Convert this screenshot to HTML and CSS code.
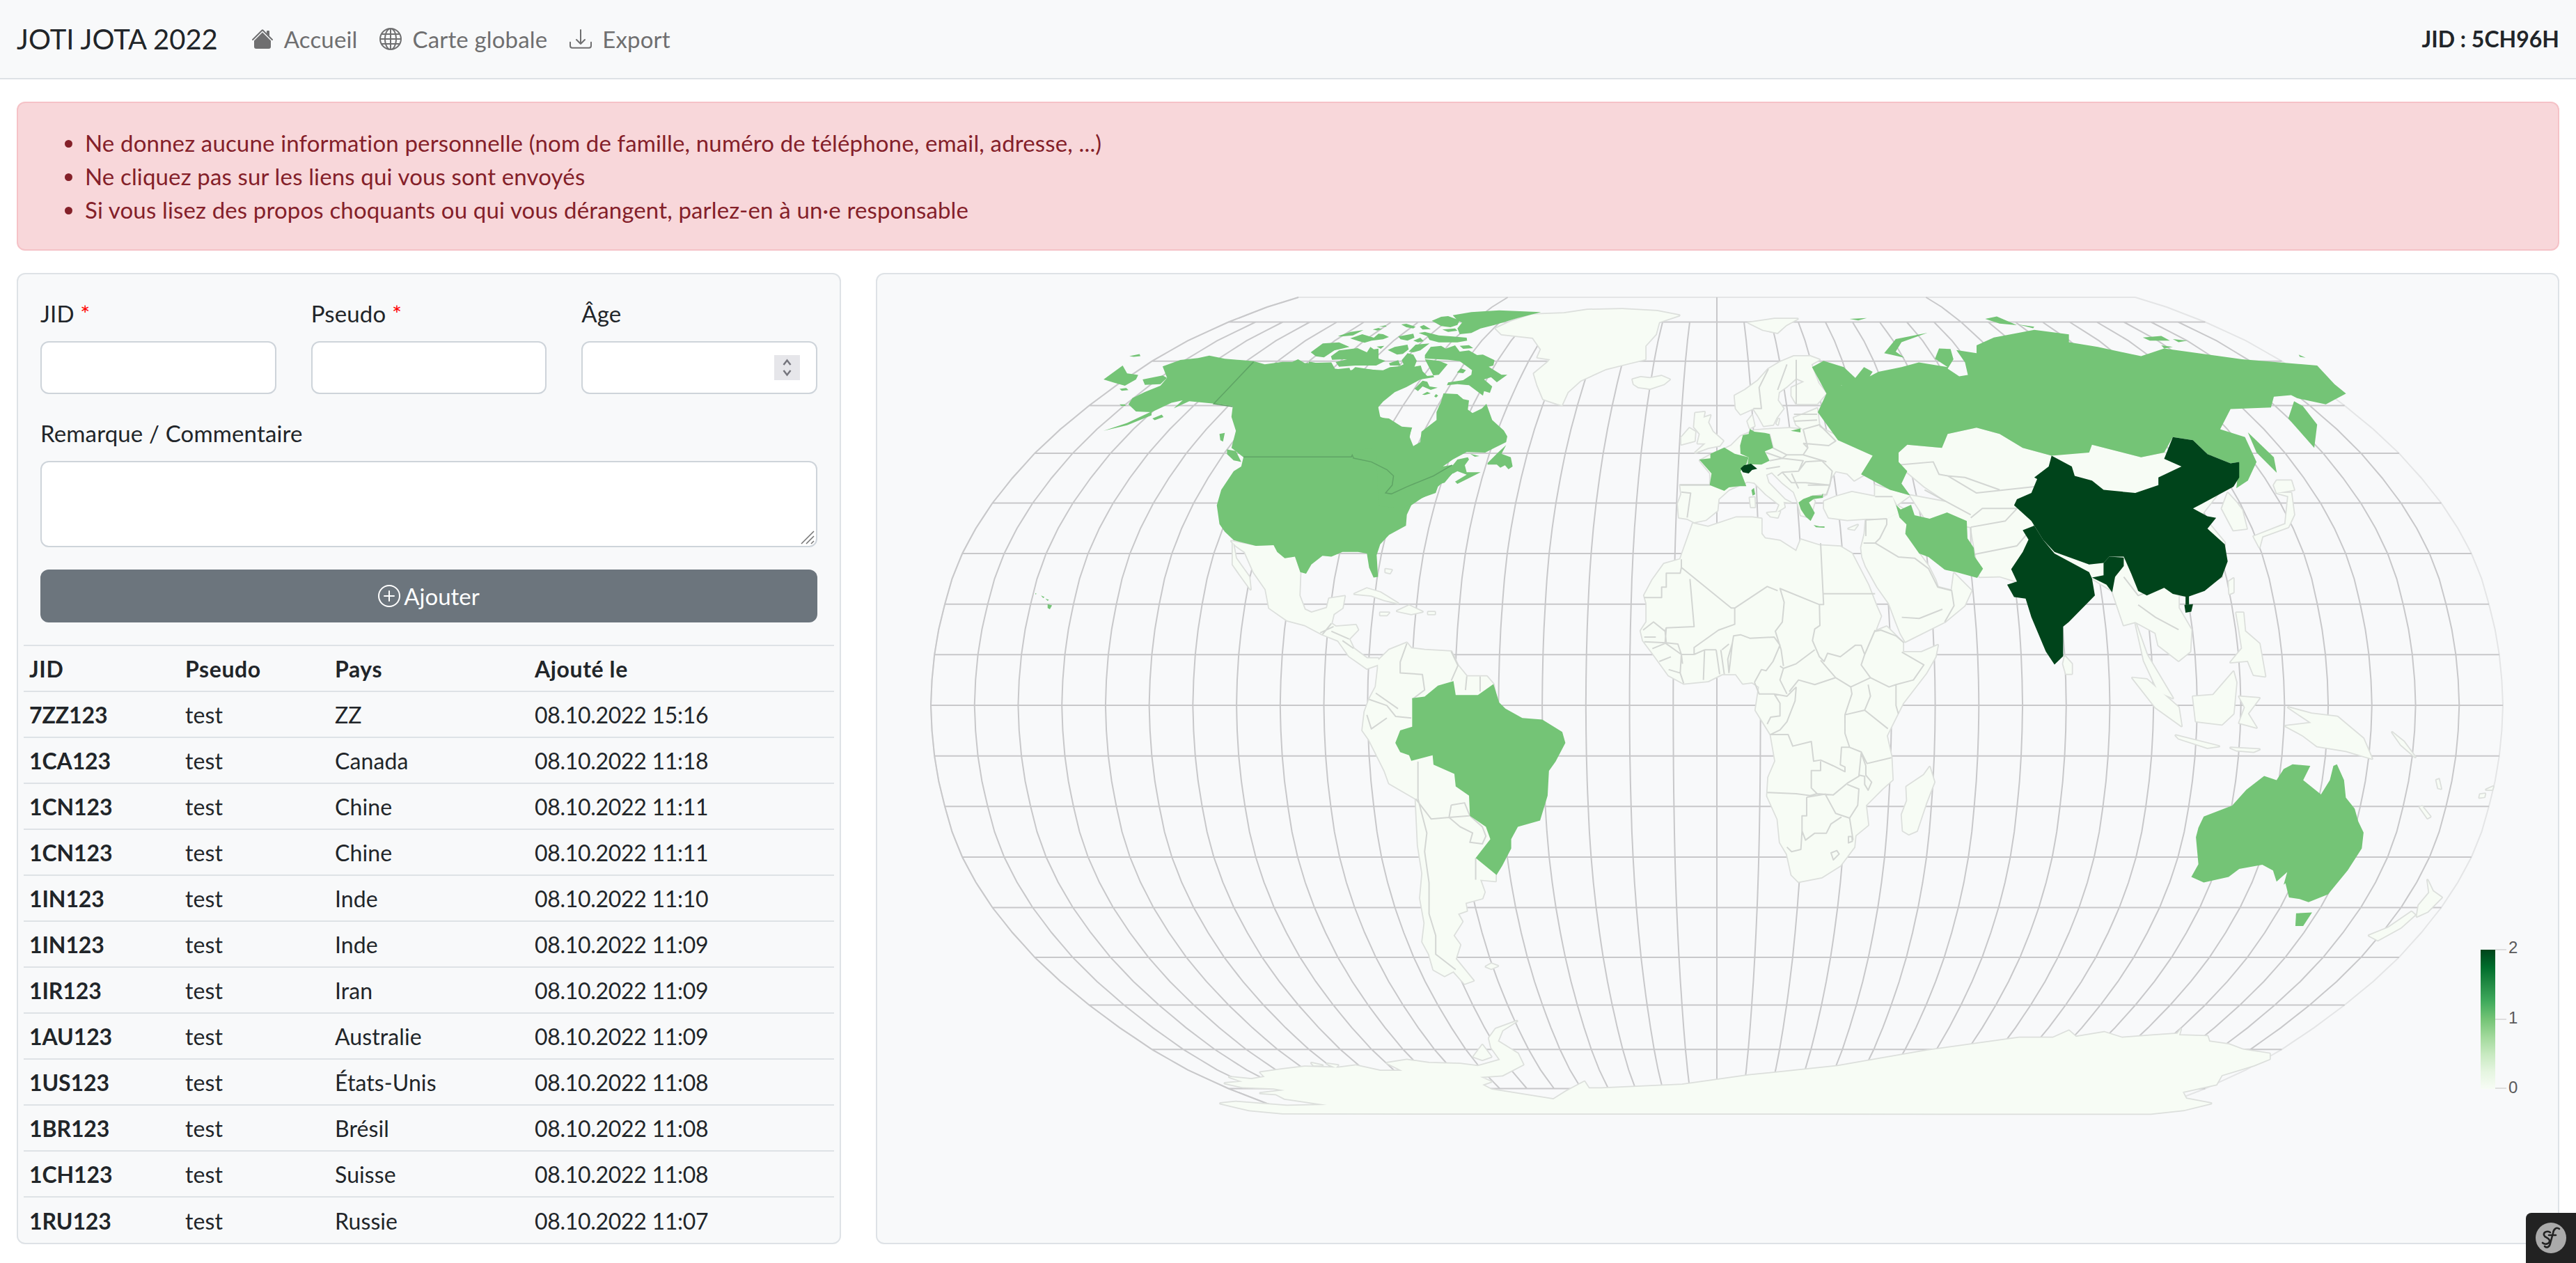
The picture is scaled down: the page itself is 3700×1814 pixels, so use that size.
FILE: index.html
```html
<!DOCTYPE html>
<html lang="fr">
  <head>
    <meta charset="UTF-8" />
    <title>JOTI JOTA 2022</title>
    <link rel="stylesheet" href="styles.css">
  </head>
  <body>
    <nav class="navbar">
      <a class="brand" href="#">JOTI JOTA 2022</a>
      <a class="nav-link" href="#">
        <svg class="icon" viewBox="0 0 16 16"><path fill-rule="evenodd" d="m8 3.293 6 6V13.5a1.5 1.5 0 0 1-1.5 1.5h-9A1.5 1.5 0 0 1 2 13.5V9.293l6-6zm5-.793V6l-2-2V2.5a.5.5 0 0 1 .5-.5h1a.5.5 0 0 1 .5.5z"/><path fill-rule="evenodd" d="M7.293 1.5a1 1 0 0 1 1.414 0l6.647 6.646a.5.5 0 0 1-.708.708L8 2.207 1.354 8.854a.5.5 0 1 1-.708-.708L7.293 1.5z"/></svg>
        Accueil
      </a>
      <a class="nav-link" href="#">
        <svg class="icon" viewBox="0 0 16 16"><path d="M0 8a8 8 0 1 1 16 0A8 8 0 0 1 0 8zm7.5-6.923c-.67.204-1.335.82-1.887 1.855A7.97 7.97 0 0 0 5.145 4H7.5V1.077zM4.09 4a9.267 9.267 0 0 1 .64-1.539 6.7 6.7 0 0 1 .597-.933A7.025 7.025 0 0 0 2.255 4H4.09zm-.582 3.5c.03-.877.138-1.718.312-2.5H1.674a6.958 6.958 0 0 0-.656 2.5h2.49zM4.847 5a12.5 12.5 0 0 0-.338 2.5H7.5V5H4.847zM8.5 5v2.5h2.99a12.495 12.495 0 0 0-.337-2.5H8.5zM4.51 8.5a12.5 12.5 0 0 0 .337 2.5H7.5V8.5H4.51zm3.99 0V11h2.653c.187-.765.306-1.608.338-2.5H8.5zM5.145 12c.138.386.295.744.468 1.068.552 1.035 1.218 1.65 1.887 1.855V12H5.145zm.182 2.472a6.696 6.696 0 0 1-.597-.933A9.268 9.268 0 0 1 4.09 12H2.255a7.024 7.024 0 0 0 3.072 2.472zM3.82 11a13.652 13.652 0 0 1-.312-2.5h-2.49c.062.89.291 1.733.656 2.5H3.82zm6.853 3.472A7.024 7.024 0 0 0 13.745 12H11.91a9.27 9.27 0 0 1-.64 1.539 6.688 6.688 0 0 1-.597.933zM8.5 12v2.923c.67-.204 1.335-.82 1.887-1.855.173-.324.33-.682.468-1.068H8.5zm3.68-1h2.146c.365-.767.594-1.61.656-2.5h-2.49a13.65 13.65 0 0 1-.312 2.5zm2.802-3.5a6.959 6.959 0 0 0-.656-2.5H12.18c.174.782.282 1.623.312 2.5h2.49zM11.27 2.461c.247.464.462.98.64 1.539h1.835a7.024 7.024 0 0 0-3.072-2.472c.218.284.418.598.597.933zM10.855 4a7.966 7.966 0 0 0-.468-1.068C9.835 1.897 9.17 1.282 8.5 1.077V4h2.355z"/></svg>
        Carte globale
      </a>
      <a class="nav-link" href="#">
        <svg class="icon" viewBox="0 0 16 16"><path d="M.5 9.9a.5.5 0 0 1 .5.5v2.5a1 1 0 0 0 1 1h12a1 1 0 0 0 1-1v-2.5a.5.5 0 0 1 1 0v2.5a2 2 0 0 1-2 2H2a2 2 0 0 1-2-2v-2.5a.5.5 0 0 1 .5-.5z"/><path d="M7.646 11.854a.5.5 0 0 0 .708 0l3-3a.5.5 0 0 0-.708-.708L8.5 10.293V1.5a.5.5 0 0 0-1 0v8.793L5.354 8.146a.5.5 0 1 0-.708.708l3 3z"/></svg>
        Export
      </a>
      <span class="jid">JID : 5CH96H</span>
    </nav>

    <main class="page">
      <div class="alert">
        <ul>
          <li>Ne donnez aucune information personnelle (nom de famille, numéro de téléphone, email, adresse, ...)</li>
          <li>Ne cliquez pas sur les liens qui vous sont envoyés</li>
          <li>Si vous lisez des propos choquants ou qui vous dérangent, parlez-en à un·e responsable</li>
        </ul>
      </div>

      <div class="columns">
        <section class="panel">
          <form class="entry-form">
            <div class="form-row">
              <div>
                <label for="jid">JID <span class="required">*</span></label>
                <input id="jid" type="text" />
              </div>
              <div>
                <label for="pseudo">Pseudo <span class="required">*</span></label>
                <input id="pseudo" type="text" />
              </div>
              <div class="number-field">
                <label for="age">Âge</label>
                <input id="age" type="number" />
                <span class="spin">
                  <svg viewBox="0 0 37 36"><path d="M13.5 14 18.500 7.500 23.500 14M13.500 22 18.500 28.500 23.500 22"/></svg>
                </span>
              </div>
            </div>
            <div class="comment-field">
              <label for="comment">Remarque / Commentaire</label>
              <textarea id="comment"></textarea>
              <svg class="grip" viewBox="0 0 22 22"><path d="M2 20 20 2M9 20 20 9M16 20l4-4"/></svg>
            </div>
            <button class="btn-add" type="button">
              <svg class="icon" viewBox="0 0 16 16"><path d="M8 15A7 7 0 1 1 8 1a7 7 0 0 1 0 14zm0 1A8 8 0 1 0 8 0a8 8 0 0 0 0 16z"/><path d="M8 4a.5.5 0 0 1 .5.5v3h3a.5.5 0 0 1 0 1h-3v3a.5.5 0 0 1-1 0v-3h-3a.5.5 0 0 1 0-1h3v-3A.5.5 0 0 1 8 4z"/></svg>
              Ajouter
            </button>
          </form>

          <table class="entries">
            <colgroup>
              <col class="col-jid"><col class="col-pseudo"><col class="col-pays"><col>
            </colgroup>
            <thead>
              <tr><th>JID</th><th>Pseudo</th><th>Pays</th><th>Ajouté le</th></tr>
            </thead>
            <tbody>
              <tr><th>7ZZ123</th><td>test</td><td>ZZ</td><td>08.10.2022 15:16</td></tr>
              <tr><th>1CA123</th><td>test</td><td>Canada</td><td>08.10.2022 11:18</td></tr>
              <tr><th>1CN123</th><td>test</td><td>Chine</td><td>08.10.2022 11:11</td></tr>
              <tr><th>1CN123</th><td>test</td><td>Chine</td><td>08.10.2022 11:11</td></tr>
              <tr><th>1IN123</th><td>test</td><td>Inde</td><td>08.10.2022 11:10</td></tr>
              <tr><th>1IN123</th><td>test</td><td>Inde</td><td>08.10.2022 11:09</td></tr>
              <tr><th>1IR123</th><td>test</td><td>Iran</td><td>08.10.2022 11:09</td></tr>
              <tr><th>1AU123</th><td>test</td><td>Australie</td><td>08.10.2022 11:09</td></tr>
              <tr><th>1US123</th><td>test</td><td>États-Unis</td><td>08.10.2022 11:08</td></tr>
              <tr><th>1BR123</th><td>test</td><td>Brésil</td><td>08.10.2022 11:08</td></tr>
              <tr><th>1CH123</th><td>test</td><td>Suisse</td><td>08.10.2022 11:08</td></tr>
              <tr><th>1RU123</th><td>test</td><td>Russie</td><td>08.10.2022 11:07</td></tr>
            </tbody>
          </table>
        </section>

        <section class="panel map-panel">
          <svg class="map" viewBox="1260 394 2414 1391" width="2414" height="1391">
            <defs>
              <linearGradient id="greens" x1="0" y1="1" x2="0" y2="0">
                <stop offset="0" stop-color="#f7fcf5"/>
                <stop offset=".125" stop-color="#e5f5e0"/>
                <stop offset=".25" stop-color="#c7e9c0"/>
                <stop offset=".375" stop-color="#a1d99b"/>
                <stop offset=".5" stop-color="#74c476"/>
                <stop offset=".625" stop-color="#41ab5d"/>
                <stop offset=".75" stop-color="#238b45"/>
                <stop offset=".875" stop-color="#006d2c"/>
                <stop offset="1" stop-color="#00441b"/>
              </linearGradient>
            </defs>

            <!-- filled in by map.js -->
            <g id="graticule"></g>

            <!-- countries with no entry -->
            <g class="land-coast"><g id="lands">
              <g transform="translate(1880 430) scale(.3333)">
                <path d="M805,125 L870,95 960,65 1100,60 1200,45 1350,42 1500,50 1596,69 1509,98 1495,150 1450,200 1450,258 1380,275 1280,300 1170,350 1115,400 1090,455 1070,450 1010,430 985,370 970,320 1030,270 1040,258 985,250 1000,215 965,165 830,150Z"/>
                <path d="M1395,345 L1430,335 1470,340 1520,330 1555,345 1530,365 1470,385 1420,378 1400,365Z"/>
              </g>
              <g transform="translate(1300 400) scale(.6378 .4464)">
                <path d="M735,845 L790,860 830,858 838,880 855,900 878,895 890,945 888,1020 900,1065 915,1075 950,1060 955,1030 990,1022 985,1060 965,1080 960,1110 970,1120 1015,1115 1020,1130 1000,1160 1010,1190 1040,1222 1065,1222 1070,1240 1040,1255 1025,1240 1000,1215 975,1165 940,1145 900,1115 860,1100 820,1060 812,1000 785,945 765,880 745,860Z"/>
                <path d="M738,845 L745,900 775,960 778,1000 755,955 738,920Z"/>
                <path d="M1012,1015 L1040,997 1070,1010 1110,1045 1080,1035 1050,1020Z"/>
                <path d="M1108,1070 L1135,1052 1165,1072 1140,1080Z"/>
                <path d="M1070,1075 h20 l-5,8 h-15Z"/>
                <path d="M1178,1073 h15 v7 h-15Z"/>
                <path d="M1082,935 l14,3 -4,10 -10,-3Z"/>
              </g>
              <g transform="translate(1300 1000) scale(.6378 .4464)">
                <path d="M1065,-114 L1090,-149 1130,-172 1140,-154 1170,-149 1230,-144 1245,-99 1265,-64 1310,-64 1325,-39 1330,0 1300,100 1330,570 1330,595 1295,590 1305,630 1300,650 1262,665 1265,690 1245,700 1255,725 1235,770 1250,800 1240,845 1280,915 1260,925 1235,885 1215,900 1190,880 1180,830 1165,790 1170,730 1160,650 1165,570 1155,480 1150,330 1090,280 1080,240 1045,140 1030,110 1035,50 1045,10 1060,-30 1065,-90Z"/>
                <path d="M1308,870 L1320,860 1335,868 1320,877Z"/>
                <path d="M850,1342 L775,1332 710,1310 745,1305 860,1318 950,1315 880,1300 855,1295 835,1280 800,1277 855,1268 830,1262 760,1258 720,1245 760,1240 730,1225 780,1232 810,1225 800,1210 850,1200 900,1192 975,1195 1015,1188 1070,1205 1120,1205 1085,1180 1130,1170 1180,1180 1250,1183 1290,1190 1340,1170 1320,1130 1315,1100 1330,1070 1378,1045 1345,1075 1335,1110 1380,1150 1392,1185 1345,1220 1295,1225 1320,1240 1300,1250 1320,1265 1460,1297 1490,1270 1530,1240 1540,1262 1568,1262 1750,1250 1900,1220 2100,1190 2300,1140 2509,1099 2585,1099 2621,1076 2637,1096 2701,1081 2741,1099 2813,1091 2865,1086 2873,1071 2869,1091 2933,1094 2937,1111 2981,1120 3013,1137 3073,1150 3073,1167 3037,1188 2965,1219 2953,1249 2877,1273 2885,1295 2941,1310 2881,1331 2805,1343Z"/>
                <path d="M915,1180 l25,8 -20,0Z"/>
                <path d="M950,1182 l25,5 -5,8Z"/>
                <path d="M1280,1160 l20,-38 20,38 -20,10Z"/>
              </g>
              <g transform="translate(2360 480) scale(.3333)">
                <path d="M395,265 L440,240 495,200 540,150 590,120 650,95 720,95 760,110 725,130 755,210 790,255 750,300 660,300 640,265 640,230 695,205 660,190 620,225 585,250 580,285 605,320 575,360 560,390 520,395 495,350 475,320 420,345 400,320Z"/>
                <path d="M450,375 L470,350 480,395 460,405Z"/>
                <path d="M160,650 L290,650 290,600 245,545 290,520 360,490 380,480 420,440 480,415 530,410 630,405 690,410 660,390 650,360 690,345 750,320 760,400 990,520 980,580 945,610 910,630 880,600 830,590 810,620 790,690 770,700 720,700 740,720 720,790 680,780 665,720 650,680 600,640 555,595 530,605 540,640 610,712 635,725 605,722 610,745 575,767 588,735 530,690 480,640 450,635 370,670 325,710 320,760 270,800 220,810 190,795 155,790 150,730 165,690Z"/>
                <path d="M535,770 L590,765 580,790 550,785Z"/>
                <path d="M460,705 L480,703 482,745 465,745Z"/>
                <path d="M225,340 L265,335 260,360 290,350 280,380 300,420 345,460 330,480 280,490 225,510 270,470 235,470 245,430 220,400Z"/>
                <path d="M165,445 L200,405 225,420 222,460 165,475Z"/>
                <path d="M575,385 l8,-20 3,0 -5,25Z"/>
                <path d="M885,838 L925,822 910,842Z"/>
                <path d="M780,720 L830,700 900,680 1000,700 1075,700 1100,770 1050,795 960,795 880,800 800,790 780,750Z"/>
                <path d="M960,800 L1050,795 1100,770 1090,735 1150,770 1130,850 1190,945 1230,1000 1260,1060 1270,1090 1330,1105 1340,1030 1370,1060 1415,1105 1385,1170 1300,1240 1130,1325 1110,1290 1090,1240 1060,1160 1010,1090 960,1000 945,960 940,920 955,860Z"/>
                <path d="M1000,650 L1075,672 1150,695 1095,735 1075,700 1000,700Z"/>
              </g>
              <g transform="translate(2340 780) scale(.3333)">
                <path d="M65,225 L100,160 150,90 220,70 275,-85 340,-70 460,-110 530,-110 570,-105 570,-40 585,-20 650,-10 720,35 740,-15 820,10 910,15 960,45 1030,180 1065,270 1085,315 1060,380 1110,360 1180,430 1180,470 1260,470 1330,440 1320,490 1280,560 1180,690 1160,730 1130,790 1110,830 1130,920 1135,1020 1090,1060 1020,1130 1030,1215 975,1260 970,1310 910,1390 830,1440 730,1460 700,1430 680,1340 650,1290 640,1190 595,1090 600,1010 630,940 610,825 545,720 560,620 530,600 490,605 460,565 400,565 340,595 235,605 170,570 105,480 60,420 50,378 75,340 75,260Z"/>
                <path d="M1195,1050 L1270,1000 1295,965 1315,1030 1280,1120 1240,1240 1205,1255 1180,1240 1175,1170 1198,1110Z"/>
              </g>
              <g transform="translate(2300 400) scale(.8292 .4464)">
                <path d="M255,142 L300,130 340,130 320,150 305,175 280,165Z"/>
                <path d="M515,560 L530,535 590,545 600,500 650,480 690,500 730,545 780,570 850,535 935,575 975,560 1005,600 1090,640 1040,760 1080,850 1075,960 1010,1020 885,1005 850,965 720,975 690,958 655,960 640,800 560,770 535,698 600,720 560,670 515,600Z"/>
                <path d="M885,1005 L905,1115 925,1105 960,1140 965,1180 1000,1230 1020,1200 1022,1130 1000,1060 1000,1020 950,1000Z"/>
                <path d="M925,1105 L945,1210 990,1350 965,1330 940,1230Z"/>
                <path d="M920,1285 L945,1290 1000,1380 1005,1440 960,1380Z"/>
                <path d="M995,1470 L1070,1505 1050,1510 1000,1480Z"/>
                <path d="M1090,1510 l50,5 -10,8 -30,-5Z"/>
                <path d="M1025,1345 L1060,1340 1095,1265 1100,1300 1095,1400 1075,1435 1030,1425Z"/>
                <path d="M1105,1345 L1140,1350 1120,1400 1135,1445 1105,1430 1115,1380Z"/>
                <path d="M1100,1075 L1112,1075 1115,1135 1140,1175 1150,1280 1130,1275 1120,1230 1090,1235 1110,1190 1105,1130Z"/>
                <path d="M1087,975 L1095,965 1095,1010 1088,1015Z"/>
                <path d="M1190,1380 L1230,1400 1275,1410 1320,1480 1335,1545 1290,1520 1240,1505 1215,1470 1185,1440 1230,1430Z"/>
                <path d="M1130,830 L1185,790 1190,700 1170,690 1195,690 1200,760 1190,800 1145,830 1140,865Z"/>
                <path d="M1170,650 L1195,650 1200,680 1170,690 1165,665Z"/>
                <path d="M1085,690 L1075,740 1095,810 1118,805 1110,745 1100,720Z"/>
                <path d="M803,1215 L815,1240 815,1272 805,1272 800,1240Z"/>
                <path d="M1370,1460 l20,30 20,50 -25,-40Z"/>
              </g>
              <g transform="translate(2900 1100) scale(.5102 .4554)">
                <path d="M985,535 L1040,510 1105,460 1115,470 1075,510 1010,550Z"/>
                <path d="M1125,440 L1155,400 1150,360 1165,395 1190,415 1150,460 1120,475Z"/>
                <path d="M1175,45 L1182,42 1188,72 1180,70Z"/>
                <path d="M1128,130 L1135,128 1158,160 1150,165Z"/>
                <path d="M1298,90 L1312,88 1310,98 1296,100Z"/>
                <path d="M1315,75 L1335,65 1332,75Z"/>
              </g>
            </g></g>
            <use class="land-fill" href="#lands"/>

            <!-- inner borders -->
            <g class="borders">
              <path transform="translate(1300 400) scale(.6378 .4464)" d="M940,1145 L960,1110 M965,1120 L935,1140 M1000,1160 L960,1135 M1010,1190 L985,1165"/>
              <path transform="translate(1300 1000) scale(.6378 .4464)" d="M1130,-170 L1115,-110 1115,-75 1165,-70 1170,-20 1142,10 M1230,-144 L1245,-99 1230,-50 M1265,-64 L1262,-20 M1295,-64 L1295,-15 M1045,10 L1085,30 1105,65 1140,70 M1040,60 L1050,105 1085,70 M1060,-10 L1110,40 M1155,210 L1155,330 M1150,330 L1185,395 1225,390 1270,385 M1230,350 L1260,343 1272,385 1300,420 1308,450 1300,475 1272,470 1278,440 1250,420 1225,390 1230,350 M1155,330 L1175,440 1170,500 1180,600 1180,700 1195,770 1195,830 1240,880 M1285,520 L1285,590"/>
              <path transform="translate(2340 780) scale(.3333)" d="M225,70 L225,105 440,280 455,280 595,187 640,205 M65,235 L140,235 140,190 160,190 160,130 220,130 225,105 M262,155 L280,360 160,365 155,380 105,340 M455,280 L455,350 385,375 280,450 280,480 M650,195 L668,255 660,340 630,380 655,460 665,530 M825,0 L838,265 820,265 648,195 M838,218 L1060,218 M820,265 L822,355 800,370 790,420 820,490 840,510 855,475 910,490 975,440 1000,440 1015,480 1060,375 M825,505 L890,580 955,620 1040,580 1000,525 1015,480 M1060,380 L1085,375 1150,400 1185,430 M1175,470 L1270,525 1225,590 1150,610 1120,620 1040,580 M1150,610 L1150,700 1160,735 M1030,610 L1040,660 1015,720 1115,800 M955,620 L960,650 930,740 1015,720 M690,640 L730,590 800,610 890,580 M720,620 L715,680 680,770 650,805 610,825 685,825 705,875 785,855 795,940 825,935 880,960 930,985 930,965 910,955 915,880 950,880 930,820 930,740 M950,880 L1000,900 1025,950 1130,925 M825,940 L825,980 785,980 785,1055 810,1080 880,1085 940,1035 990,1005 1000,905 M1000,905 L1020,960 1020,1000 1045,1030 1030,1065 1015,1040 1015,1005 990,1000 M940,1040 L990,1060 985,1130 950,1185 965,1280 M880,1085 L845,1082 890,1165 950,1185 M765,1095 L845,1082 M765,1095 L765,1175 745,1175 745,1240 760,1280 800,1250 850,1250 870,1210 915,1180 M595,1075 L720,1080 780,1088 810,1080 M745,1240 L740,1320 700,1330 680,1310 M430,560 L445,430 450,400 480,395 520,410 625,405 650,440 620,510 590,550 570,545 540,600 M540,600 L560,650 625,650 680,660 720,620 M650,530 L665,540 650,590 680,650 M665,540 L720,520 800,460 M625,650 L650,690 650,745 610,750 595,780 M325,460 L320,590 M375,460 L390,565 M325,460 L375,460 M280,480 L325,460 M395,460 L410,565 M430,560 L425,500 445,430 M400,460 L430,435 M160,365 L155,430 225,480 280,480 M100,455 L160,430 210,435 225,480 230,520 M225,480 L220,560 235,605 M170,545 L220,560 M130,510 L180,490 M60,375 L105,340 155,380 160,430 65,425 M65,405 L115,405 M870,1335 L895,1325 905,1340 880,1365Z M945,1265 L960,1265 962,1285 945,1292Z"/>
              <path transform="translate(2360 480) scale(.3333)" d="M545,430 L560,490 620,520 690,520 710,490 690,410 M690,470 L710,490 690,520 790,550 M690,410 L760,390 830,460 800,480 690,470 M650,375 L750,370 M650,345 L750,345 M165,680 L205,685 190,790 M160,650 L290,650 M530,580 L590,570 M560,490 L620,520 600,535 530,510 M545,545 L600,535 690,545 670,590 600,595 580,610 M670,590 L700,550 770,545 815,590 805,650 700,640 M710,650 L805,650 790,690 720,700 M600,595 L640,640 700,640 M640,600 L670,665 M540,150 L500,230 510,320 475,320 M620,130 L580,240 M660,300 L660,110 M960,800 L1050,795 M950,900 L1000,900 1100,960 1170,965 1230,1010 1270,1090 1330,1105 1340,1170 1300,1240 M1115,1220 L1190,1225 1290,1185 M1000,900 L1020,880 1050,820 1050,795 M960,800 L960,870 M1000,700 L1075,700"/>
              <path transform="translate(2300 400) scale(.8292 .4464)" d="M515,600 L575,590 585,630 600,635 650,690 700,680 750,670 M560,680 L640,760 M640,770 L660,740 720,740 700,780 640,800 M640,800 L640,890 720,860 750,795 M905,960 L930,1020 960,1000 M930,1050 L960,1090 1000,1130 M600,635 L630,640 690,680"/>
            </g>

            <!-- one entry -->
            <g class="level-1">
              <g transform="translate(1300 400) scale(.6378 .4464)">
                <path d="M580,283 L620,262 660,256 685,248 720,258 785,266 810,276 850,268 872,268 885,260 900,272 960,270 968,290 1000,295 1040,292 1085,297 1100,350 1065,410 1070,445 1090,455 1120,478 1140,482 1135,520 1150,560 1210,605 1232,600 1235,625 1200,670 1195,690 1165,705 1140,730 1130,760 1128,795 1090,825 1070,855 1062,890 1065,960 1055,962 1045,930 1040,885 1020,880 985,880 960,895 940,892 915,920 903,950 890,945 878,895 855,900 838,880 830,858 790,860 740,842 720,815 708,790 702,730 712,680 740,620 757,605 762,575 735,545 745,490 735,445 738,410 700,403 640,395 605,418 625,392 600,400 555,430 520,428 503,405 512,385 540,365 575,345 590,320Z"/>
                <path d="M555,428 L500,465 447,490 500,472 555,440Z"/>
                <path d="M557,450 L578,438 582,446 562,456Z"/>
                <path d="M535,325 L580,312 590,320 575,340 540,342Z"/>
                <path d="M447,325 L490,280 500,305 525,310 520,325 495,345 470,335Z"/>
                <path d="M505,250 L528,243 530,250 515,252Z"/>
                <path d="M483,355 l15,-3 5,7 -15,2Z"/>
                <path d="M483,405 l12,0 2,5 -10,0Z"/>
                <path d="M708,500 L720,497 716,525 710,520Z"/>
                <path d="M725,550 L745,555 757,590 740,585 725,565Z"/>
                <path d="M321,1048 L331,1052 326,1064 321,1060Z"/>
                <path d="M306,1020 l8,5 -3,3Z"/>
                <path d="M316,1030 l8,4 -3,3Z"/>
                <path d="M293,1012 l3,2 -2,3Z"/>
              </g>
              <g transform="translate(1880 430) scale(.3333)">
                <path d="M0,268 L40,275 110,295 100,303 175,295 180,310 200,292 290,305 320,305 350,292 390,288 408,280 400,262 425,232 450,238 465,265 455,290 482,285 490,310 510,330 560,325 598,280 560,265 500,258 540,335 480,345 420,378 370,400 320,440 290,475 310,510 345,513 400,548 445,552 433,590 450,632 480,615 485,570 550,520 550,485 570,440 580,405 640,408 665,430 690,435 685,475 705,490 745,470 765,450 790,520 840,565 855,590 850,615 800,640 760,660 680,658 620,690 570,725 620,715 622,745 585,790 550,800 520,840 400,900 300,890 290,640 0,670Z"/>
                <path d="M570,725 L620,715 640,690 685,680 690,690 672,715 680,745 740,745 700,765 640,795 630,785 680,755 640,740 622,750Z"/>
                <path d="M770,705 L815,660 850,628 830,665 870,680 878,720 860,732 845,715 825,725 810,712 770,712Z"/>
                <path d="M695,665 L735,675 715,678Z"/>
                <path d="M500,240 L525,205 570,200 590,212 630,198 650,225 690,220 725,240 750,238 800,262 795,285 775,290 830,325 855,325 810,357 785,335 755,345 790,375 780,403 755,395 750,415 710,385 690,370 640,365 595,370 600,358 665,348 700,325 703,305 680,288 650,266 600,260 500,255Z"/>
                <path d="M638,315 L655,297 677,305 665,318Z"/>
                <path d="M95,245 L130,220 210,210 250,228 265,205 280,215 300,212 300,255 330,265 290,285 200,285 130,290 115,270 165,258 100,260Z"/>
                <path d="M8,228 L60,190 130,185 175,205 110,220 65,250 30,245Z"/>
                <path d="M125,158 L180,140 235,132 190,155 140,160Z"/>
                <path d="M178,168 L230,150 280,165 300,148 320,150 345,162 320,172 270,178 240,187 215,180Z"/>
                <path d="M275,130 L300,123 315,128 295,134Z"/>
                <path d="M300,118 L330,112 335,118Z"/>
                <path d="M398,108 L420,105 460,118 450,125 420,120Z"/>
                <path d="M478,118 L495,110 525,128 490,130Z"/>
                <path d="M385,160 L450,148 455,165 425,178 395,172Z"/>
                <path d="M450,178 L480,165 495,180 470,185Z"/>
                <path d="M473,145 L500,140 560,155 620,160 680,165 682,178 640,185 560,185 520,175 510,158Z"/>
                <path d="M340,218 L370,205 425,195 430,215 405,235 380,238Z"/>
                <path d="M430,225 L460,195 520,190 480,220 450,228Z"/>
                <path d="M292,203 L325,200 310,213Z"/>
                <path d="M345,275 L385,262 395,285 350,285Z"/>
                <path d="M650,200 L690,197 708,210 665,213Z"/>
                <path d="M620,68 L700,55 820,47 1000,55 900,80 800,110 740,125 700,145 650,150 640,125 660,100 640,90Z"/>
                <path d="M530,92 L570,75 600,72 650,90 640,110 610,120 570,115Z"/>
                <path d="M575,130 L630,125 640,135 600,140Z"/>
                <path d="M455,385 L490,350 510,355 520,375 555,380 525,390 490,375 470,395Z"/>
                <path d="M488,410 L510,398 525,405 500,412Z"/>
                <path d="M540,418 L548,408 557,415 548,423Z"/>
              </g>
              <g transform="translate(1300 1000) scale(.6378 .4464)">
                <path d="M1142,6 L1170,1 1200,-34 1235,-49 1240,-4 1290,-4 1325,-39 1338,20 1352,40 1390,70 1435,75 1480,115 1487,150 1465,210 1450,240 1447,320 1430,400 1380,420 1365,460 1365,490 1345,545 1332,575 1285,520 1318,460 1308,420 1272,385 1270,320 1240,290 1237,250 1190,220 1188,190 1140,208 1135,190 1115,180 1104,150 1115,110 1142,98Z"/>
              </g>
              <g transform="translate(2360 480) scale(.3333)">
                <path d="M242,540 L290,535 290,515 350,488 395,515 455,530 445,560 420,590 445,655 415,655 370,660 350,675 287,650 295,600Z"/>
                <path d="M430,435 L455,430 460,408 480,420 525,425 545,430 560,490 525,505 545,545 510,562 450,560 455,530 420,515 418,480Z"/>
                <path d="M670,725 L690,710 730,695 770,695 775,685 775,705 735,710 715,725 740,770 722,805 700,785 680,755Z"/>
                <path d="M735,822 L760,828 782,828 782,834 745,832Z"/>
                <path d="M467,672 L478,662 483,690 472,695Z"/>
                <path d="M1090,735 L1110,755 1155,735 1170,780 1235,795 1310,768 1395,805 1398,880 1425,920 1430,960 1465,1010 1440,1050 1350,1025 1300,1015 1230,960 1190,945 1130,860 1135,820 1105,790Z"/>
              </g>
              <g transform="translate(2300 400) scale(.8292 .4464)">
                <path d="M365,285 L385,265 420,285 440,320 415,345 395,310 415,345 440,320 455,285 470,300 465,315 480,300 520,285 550,270 600,285 578,258 585,225 605,227 610,260 600,290 620,315 635,310 630,270 615,230 650,240 650,215 680,190 750,165 810,180 810,205 860,220 935,250 975,225 1110,260 1240,280 1270,340 1290,370 1255,405 1205,385 1195,375 1165,380 1160,415 1090,420 1072,485 1115,510 1135,590 1120,650 1100,675 1105,590 1090,595 1050,565 1025,520 990,510 975,560 935,575 850,535 845,560 780,570 730,545 690,500 650,480 600,500 590,545 530,535 515,560 515,590 530,620 520,660 535,698 500,680 450,630 470,570 410,520 375,430 390,370Z"/>
                <path d="M1200,395 L1215,410 1240,470 1235,545 1190,450Z"/>
                <path d="M1120,495 L1165,575 1170,625 1135,560Z"/>
                <path d="M490,240 L510,195 565,175 520,205 510,235 525,255Z"/>
                <path d="M665,130 L685,122 720,150 690,145Z"/>
                <path d="M722,148 L750,155 748,160Z"/>
                <path d="M938,190 L970,185 985,200 950,200Z"/>
                <path d="M990,195 L1015,200 1000,205Z"/>
                <path d="M970,215 L990,220 975,225Z"/>
                <path d="M328,490 L345,482 345,495Z"/>
                <path d="M430,130 L460,127 445,135Z"/>
                <path d="M1208,245 L1220,255 1210,252Z"/>
              </g>
              <g transform="translate(2900 1100) scale(.5102 .4554)">
                <path d="M505,195 L520,160 600,125 640,75 690,32 725,45 745,10 770,-5 820,0 800,45 850,90 875,45 885,0 895,-5 915,45 920,100 945,135 955,175 970,210 965,260 925,330 870,405 815,430 790,420 760,415 750,370 745,375 755,335 725,365 715,330 685,312 620,325 590,350 520,368 485,350 505,310 498,225Z"/>
                <path d="M780,465 L825,462 800,505 778,505Z"/>
              </g>
            </g>
            <path class="seam" transform="translate(1300 400) scale(.6378 .4464)" d="M762,574 L1005,574 1007,568 1010,578 1050,590 1085,615 1100,635 1097,665 1082,690 1095,693 1130,670 1190,635 1232,600 M785,268 L695,403 738,412"/>

            <!-- two entries -->
            <g class="level-2">
              <g transform="translate(2300 400) scale(.8292 .4464)">
                <path d="M780,570 L815,605 820,635 850,650 870,680 925,690 965,665 965,640 1005,605 975,580 990,510 1025,520 1050,565 1090,595 1105,590 1105,640 1095,670 1040,725 1025,740 1050,765 1065,770 1050,805 1080,855 1085,910 1075,960 1045,1005 1015,1025 990,1015 975,995 945,1020 930,1005 918,950 905,895 880,895 870,915 845,920 785,880 765,840 750,795 745,780 715,730 720,710 745,690 755,645 750,640 775,605Z"/>
                <path d="M1010,1050 L1025,1048 1022,1072 1012,1075Z"/>
                <path d="M1012,1020 h6 v30 h-6Z"/>
                <path d="M730,810 L750,795 765,840 785,885 845,945 850,965 855,1020 810,1105 800,1120 800,1215 785,1242 770,1200 745,1090 735,1030 715,1025 703,985 720,975 710,935 730,880 740,840Z"/>
                <path d="M850,962 L870,955 870,915 880,895 905,898 905,925 890,960 885,1010 875,985Z"/>
              </g>
              <path transform="translate(2360 480) scale(.3333)" d="M420,578 L435,565 465,558 480,570 492,580 470,585 455,600 430,595Z"/>
            </g>

            <!-- colour bar -->
            <g class="colorbar">
              <rect x="3563" y="1364" width="21" height="200" fill="url(#greens)"/>
              <path class="ticks" d="M3584 1364h16M3584 1464h16M3584 1563h16"/>
              <text x="3603" y="1369">2</text>
              <text x="3603" y="1470">1</text>
              <text x="3603" y="1570">0</text>
            </g>
          </svg>
        </section>
      </div>
    </main>

    <div class="sf-toolbar">
      <svg viewBox="0 0 44 44" width="44" height="44">
        <circle cx="22" cy="22" r="22" fill="#aaa"/>
        <path class="sf-mark" d="M21 14c-5-3-10 0-9 4 1 4 9 4 8 9-1 4-7 5-10 2M34 9c-4-3-8 0-9 6l-4 15c-1 5-5 7-8 4M19 18h10"/>
      </svg>
    </div>

    <script src="map.js"></script>
  </body>
</html>
```

FILE: styles.css
```css
/* Basic page styling */
* {
  box-sizing: border-box;
}

body {
  font-family: Lato, "Noto Sans", sans-serif;
  font-size: 33px;
  letter-spacing: 0.15px;
  line-height: 48px;
  color: #212529;
  background-color: #fff;
  margin: 0;
}

/* Navbar */
.navbar {
  display: flex;
  align-items: center;
  height: 114px;
  padding: 0 24px;
  background-color: #f8f9fa;
  border-bottom: 2px solid #dee2e6;
}

.brand {
  font-size: 40px;
  letter-spacing: 0;
  color: #212529;
  text-decoration: none;
  margin-right: 32px;
}

.nav-link {
  display: flex;
  align-items: center;
  gap: 15px;
  padding: 0 16px;
  color: #6f6f70;
  text-decoration: none;
}

.icon {
  width: 32px;
  height: 32px;
  fill: currentColor;
  flex: none;
}

.jid {
  margin-left: auto;
  font-size: 32px;
  letter-spacing: 0;
  font-weight: 700;
}

/* Page */
.page {
  padding: 32px 24px 0;
}

.alert {
  padding: 33px 32px;
  color: #842029;
  background-color: #f8d7da;
  border: 2px solid #f5c2c7;
  border-radius: 12px;
}

.alert ul {
  margin: 0;
  padding-left: 64px;
}

.columns {
  display: grid;
  grid-template-columns: 1184px 1fr;
  gap: 50px;
  margin-top: 32px;
}

.panel {
  background-color: #f8f9fa;
  border: 2px solid #dee2e6;
  border-radius: 12px;
  overflow: hidden;
}

/* Form */
.entry-form {
  padding: 32px 32px 32px;
}

.form-row {
  display: grid;
  grid-template-columns: repeat(3, 1fr);
  gap: 50px;
}

label {
  display: block;
  margin-bottom: 16px;
}

.required {
  color: red;
}

input,
textarea {
  display: block;
  width: 100%;
  height: 76px;
  padding: 12px 24px;
  font: inherit;
  background-color: #fff;
  border: 2px solid #ced4da;
  border-radius: 12px;
  outline: none;
}

input[type="number"] {
  appearance: textfield;
}

.number-field,
.comment-field {
  position: relative;
}

.spin {
  position: absolute;
  right: 25px;
  bottom: 20px;
  width: 37px;
  height: 36px;
  background-color: #e6e6ea;
}

.spin svg {
  display: block;
  fill: none;
  stroke: #75757d;
  stroke-width: 2.5;
}

.comment-field {
  margin-top: 32px;
}

textarea {
  height: 124px;
  resize: none;
}

.grip {
  position: absolute;
  right: 3px;
  bottom: 3px;
  width: 22px;
  height: 22px;
  fill: none;
  stroke: #777;
  stroke-width: 1.6;
}

.btn-add {
  display: flex;
  align-items: center;
  justify-content: center;
  gap: 5px;
  width: 100%;
  height: 76px;
  margin-top: 32px;
  font: inherit;
  color: #fff;
  background-color: #6c757d;
  border: 0;
  border-radius: 12px;
}

/* Table styling */
.entries {
  width: 1164px;
  margin: 0 8px;
  font-size: 32px;
  letter-spacing: 0.1px;
  table-layout: fixed;
  border-collapse: separate;
  border-spacing: 0;
  border-top: 2px solid #dee2e6;
}

.col-jid {
  width: 224px;
}

.col-pseudo {
  width: 215px;
}

.col-pays {
  width: 287px;
}

.entries th,
.entries td {
  height: 66px;
  padding: 2px 8px 0;
  text-align: left;
  border-bottom: 2px solid #dee2e6;
}

.entries thead th {
  letter-spacing: 0.6px;
}

.entries tbody th {
  letter-spacing: -0.1px;
}

.entries td:last-child {
  letter-spacing: -0.3px;
}

.entries tbody tr:last-child th,
.entries tbody tr:last-child td {
  height: 65px;
  border-bottom: 0;
}

/* Map */
.map {
  display: block;
}

.map path {
  vector-effect: non-scaling-stroke;
}

.grid-line {
  fill: none;
  stroke: #c8c8ca;
  stroke-width: 2;
}

.frame-line {
  fill: none;
  stroke: #e4e5e6;
  stroke-width: 2;
}

.land-coast {
  fill: #f7fcf5;
  stroke: #dcdfdc;
  stroke-width: 3.5;
  stroke-linejoin: round;
}

.land-fill {
  fill: #f7fcf5;
  stroke: none;
}

.borders {
  fill: none;
  stroke: #d3d6d3;
  stroke-width: 2;
  stroke-linejoin: round;
}

.level-1 {
  fill: #74c476;
}

.level-2 {
  fill: #00441b;
}

.seam {
  fill: none;
  stroke: #5fa465;
  stroke-width: 1.5;
}

.colorbar text {
  font-family: "Liberation Sans", sans-serif;
  font-size: 24px;
  letter-spacing: 0;
  fill: #5a5a5a;
}

.ticks {
  stroke: #dddddd;
  stroke-width: 2;
}

/* Debug toolbar */
.sf-toolbar {
  position: fixed;
  right: 0;
  bottom: 0;
  display: flex;
  align-items: center;
  justify-content: center;
  width: 72px;
  height: 72px;
  background-color: #222;
  border-top-left-radius: 8px;
}

.sf-mark {
  fill: none;
  stroke: #222;
  stroke-width: 2.6;
  stroke-linecap: round;
}
```

FILE: map.js
```js
// Robinson projection table, one row every 5 degrees of latitude
const PLEN = [1, 0.9986, 0.9954, 0.99, 0.9822, 0.973, 0.96, 0.9427, 0.9216, 0.8962, 0.8679, 0.835, 0.7986, 0.7597, 0.7186, 0.6732, 0.6213, 0.5722, 0.5322];
const PDFE = [0, 0.062, 0.124, 0.186, 0.248, 0.31, 0.372, 0.434, 0.4958, 0.5571, 0.6176, 0.6769, 0.7346, 0.7903, 0.8435, 0.8936, 0.9394, 0.9761, 1];

const CENTER_X = 2466;
const CENTER_Y = 1013;
const HALF_W = 1129;
const HALF_H = 586;

function lookup(table, lat) {
  const pos = Math.abs(lat) / 5;
  const i = Math.min(Math.floor(pos), 17);
  return table[i] + (table[i + 1] - table[i]) * (pos - i);
}

function project(lon, lat) {
  const x = CENTER_X + (lon / 180) * HALF_W * lookup(PLEN, lat);
  const y = CENTER_Y - Math.sign(lat) * HALF_H * lookup(PDFE, lat);
  return x.toFixed(1) + " " + y.toFixed(1);
}

function meridian(lon, limit) {
  const points = [];
  for (let lat = -limit; lat <= limit; lat += 2.5) {
    points.push(project(lon, lat));
  }
  return "M" + points.join("L");
}

function parallel(lat) {
  return "M" + project(-180, lat) + "L" + project(180, lat);
}

function addPath(group, className, d) {
  const path = document.createElementNS("http://www.w3.org/2000/svg", "path");
  path.setAttribute("class", className);
  path.setAttribute("d", d);
  group.appendChild(path);
}

// Draw the grid under the countries
const group = document.getElementById("graticule");

addPath(group, "frame-line", meridian(-180, 90) + meridian(180, 90) + "M" + project(-180, 90) + "L" + project(180, 90) + "M" + project(-180, -90) + "L" + project(180, -90));

let d = "";
for (let lon = -180; lon < 180; lon += 10) {
  d += meridian(lon, lon % 90 === 0 ? 90 : 80);
}
for (let lat = -80; lat <= 80; lat += 10) {
  d += parallel(lat);
}
addPath(group, "grid-line", d);
```
